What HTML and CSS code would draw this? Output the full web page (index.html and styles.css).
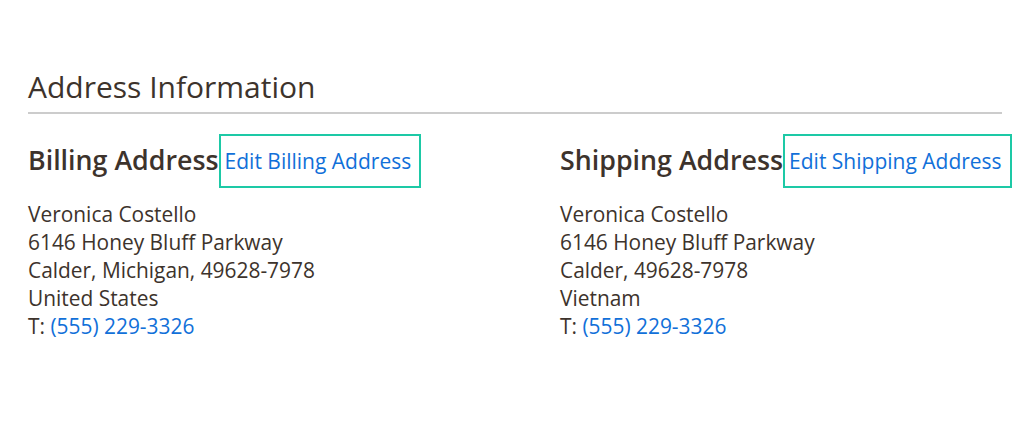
FILE: index.html
```html
<!DOCTYPE html>
<html lang="en">
<head>
<meta charset="utf-8">
<title>Address Information</title>
<link rel="stylesheet" href="styles.css">
</head>
<body>
<div class="block">
  <div class="block-title">Address Information</div>
  <div class="block-content">
    <div class="box">
      <div class="box-title"><span class="box-name">Billing Address</span><a class="edit-link" href="#">Edit Billing Address</a></div>
      <address class="box-content">Veronica Costello<br>6146 Honey Bluff Parkway<br>Calder, Michigan, 49628-7978<br>United States<br>T: <a href="#">(555) 229-3326</a></address>
    </div>
    <div class="box">
      <div class="box-title"><span class="box-name">Shipping Address</span><a class="edit-link" href="#">Edit Shipping Address</a></div>
      <address class="box-content">Veronica Costello<br>6146 Honey Bluff Parkway<br>Calder, 49628-7978<br>Vietnam<br>T: <a href="#">(555) 229-3326</a></address>
    </div>
  </div>
</div>
</body>
</html>
```

FILE: styles.css
```css
html, body {
  margin: 0;
  padding: 0;
  background: #fff;
}
body {
  font-family: "Open Sans", "Liberation Sans", sans-serif;
  color: #3d332c;
}
a {
  color: #1170d9;
  text-decoration: none;
}
.block {
  padding: 66px 18px 0 28px;
}
.block-title {
  font-size: 30px;
  font-weight: 400;
  line-height: 42px;
  padding-bottom: 4px;
  border-bottom: 2px solid #cccccc;
}
.block-content {
  display: grid;
  grid-template-columns: 532px 1fr;
  margin-top: 20px;
}
.box {
  min-width: 0;
}
.box-title {
  display: flex;
  align-items: center;
  height: 54px;
  margin-bottom: 12px;
  white-space: nowrap;
}
.box-name {
  flex: none;
  font-size: 26.8px;
  font-weight: 600;
  position: relative;
  top: -2px;
}
.edit-link {
  flex: none;
  display: flex;
  align-items: center;
  height: 54px;
  box-sizing: border-box;
  padding: 0 8px 0 4px;
  border: 2px solid #1dc9a6;
  font-size: 21px;
}
.box-content {
  font-style: normal;
  font-size: 20.9px;
  line-height: 28px;
}
```
